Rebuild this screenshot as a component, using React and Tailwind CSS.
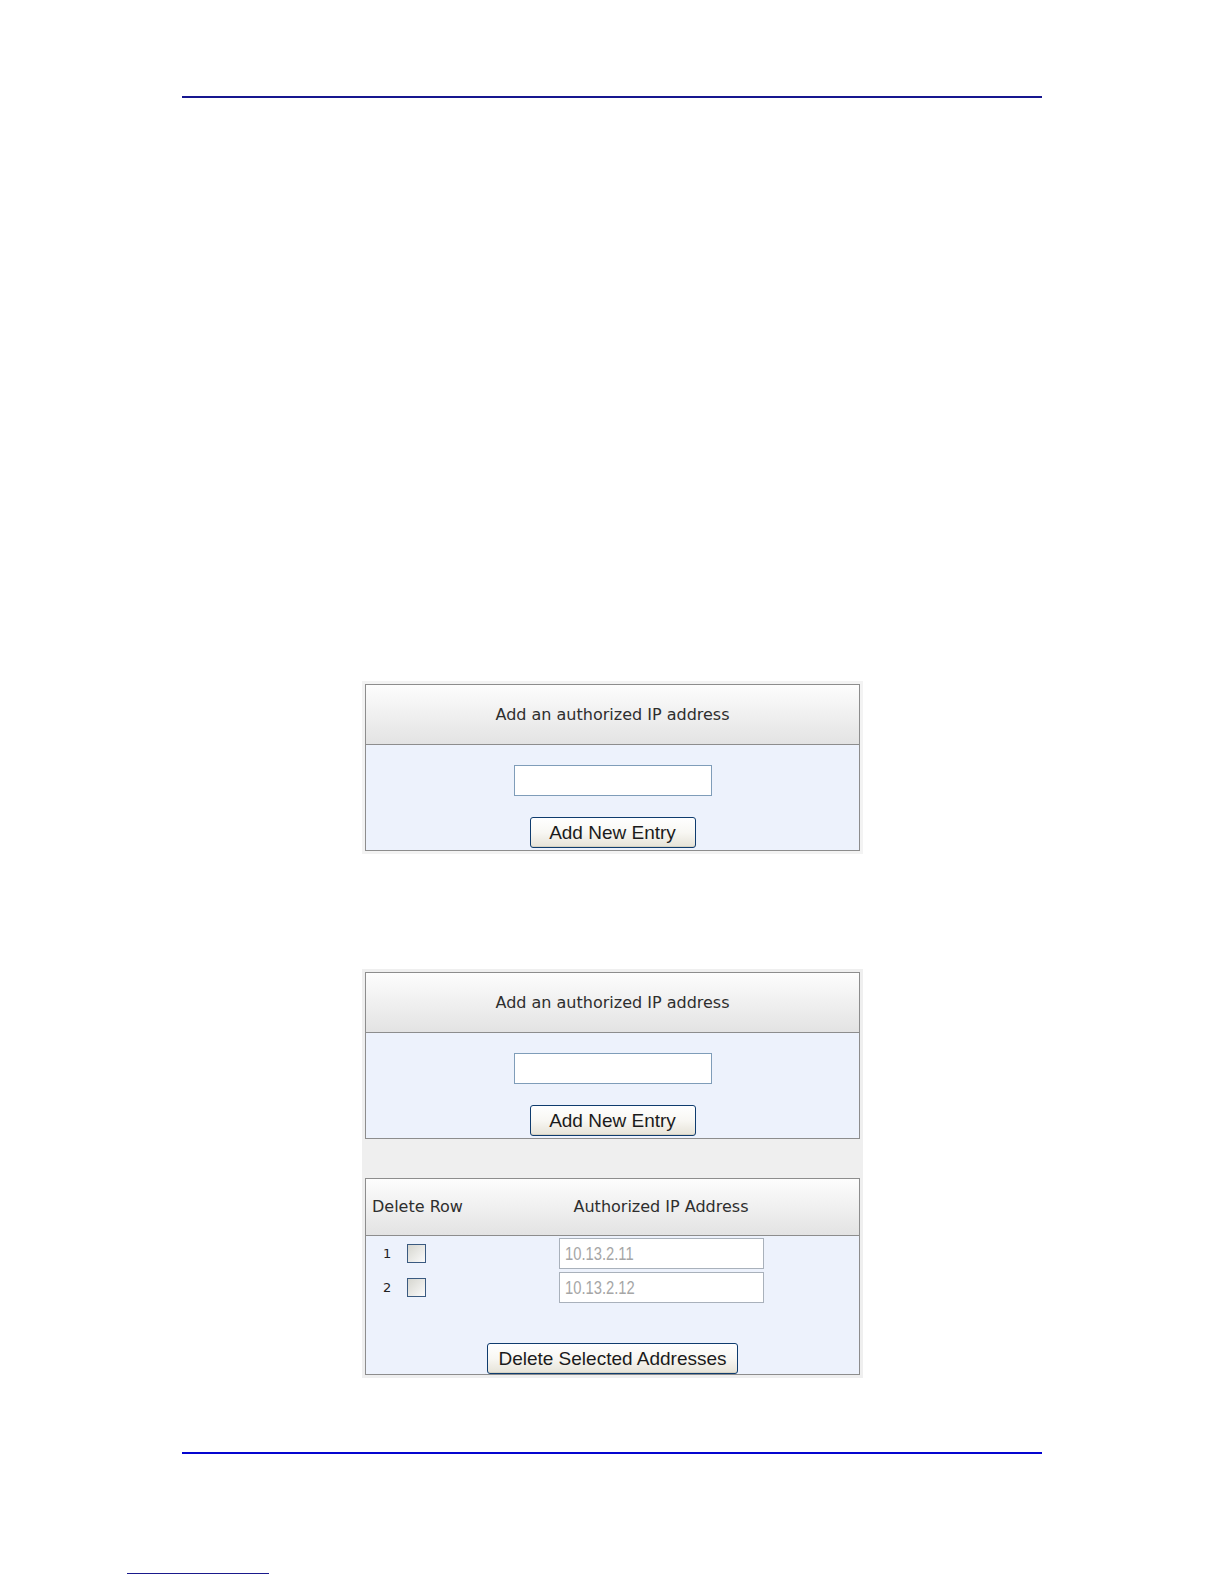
const HEAD_FONT = { fontFamily: '"DejaVu Sans", Verdana, sans-serif' };
const BTN_FONT = { fontFamily: '"Liberation Sans", Arial, sans-serif' };

function XpButton({ children, className = '' }) {
  return (
    <button
      type="button"
      style={BTN_FONT}
      className={`h-[31px] rounded-[3px] border border-[#0f3c6e] bg-linear-to-b from-white via-[#f8f7f3] to-[#e6e3d8] text-[19px] leading-none text-[#1b1b1b] shadow-[inset_0_-1px_0_#d6d2c2] ${className}`}
    >
      {children}
    </button>
  );
}

function AddBox() {
  return (
    <div className="border border-[#8d8d8d]">
      <div
        style={HEAD_FONT}
        className="flex h-[60px] items-center justify-center border-b border-[#8d8d8d] bg-linear-to-b from-[#fdfdfd] to-[#e3e3e3] text-[16px] text-[#2e2e2e]"
      >
        Add an authorized IP address
      </div>
      <div className="flex h-[105px] flex-col items-center bg-[#edf2fc] pt-[20px]">
        <input
          type="text"
          className="h-[31px] w-[198px] border border-[#7f9db9] bg-white outline-none"
        />
        <XpButton className="mt-[21px] w-[166px]">Add New Entry</XpButton>
      </div>
    </div>
  );
}

function Checkbox() {
  return (
    <div className="h-[19px] w-[19px] border border-[#3a5a80] bg-linear-to-br from-[#d6d6cf] to-[#fbfbfb]" />
  );
}

function IpRow({ n, ip }) {
  return (
    <div className="grid h-[31px] grid-cols-[97px_1fr] items-center">
      <div style={HEAD_FONT} className="flex items-center pl-[17px] text-[13px] text-[#222]">
        <span className="w-[8px]">{n}</span>
        <span className="ml-[16px]">
          <Checkbox />
        </span>
      </div>
      <div className="flex justify-center">
        {/* read-only field, text squeezed like the old IE rendering */}
        <div className="flex h-[31px] w-[205px] items-center overflow-hidden border border-[#a9b1bb] bg-white pl-[5px]">
          <span
            style={BTN_FONT}
            className="inline-block origin-left scale-x-[0.82] whitespace-nowrap text-[18px] leading-none text-[#a6a6a6]"
          >
            {ip}
          </span>
        </div>
      </div>
    </div>
  );
}

function ListBox() {
  return (
    <div className="border border-[#8d8d8d]">
      <div
        style={HEAD_FONT}
        className="grid h-[57px] grid-cols-[97px_1fr] items-center border-b border-[#8d8d8d] bg-linear-to-b from-[#fdfdfd] to-[#e3e3e3] text-[16px] text-[#2e2e2e]"
      >
        <span className="whitespace-nowrap pl-[6px]">Delete Row</span>
        <span className="text-center">Authorized IP Address</span>
      </div>
      <div className="flex h-[138px] flex-col bg-[#edf2fc] pt-[2px]">
        <IpRow n="1" ip="10.13.2.11" />
        <div className="h-[3px]" />
        <IpRow n="2" ip="10.13.2.12" />
        <div className="mt-[40px] flex justify-center">
          <XpButton className="h-[30px] w-[251px]">Delete Selected Addresses</XpButton>
        </div>
      </div>
    </div>
  );
}

export default function App() {
  return (
    <div className="flex h-[1584px] w-[1224px] flex-col bg-white pt-[96px]">
      <div className="ml-[182px] h-[2px] w-[860px] bg-[#16168f]" />

      <div className="ml-[362px] mt-[583px] w-[501px] bg-[#f3f3f3] p-[3px]">
        <AddBox />
      </div>

      <div className="ml-[362px] mt-[115px] w-[501px] bg-[#efefef] p-[3px]">
        <AddBox />
        <div className="h-[39px]" />
        <ListBox />
      </div>

      <div className="ml-[182px] mt-[74px] h-[2px] w-[860px] bg-[#0505d0]" />

      <div className="ml-[127px] mt-[119px] h-px w-[142px] bg-[#1a1a8c]" />
    </div>
  );
}
